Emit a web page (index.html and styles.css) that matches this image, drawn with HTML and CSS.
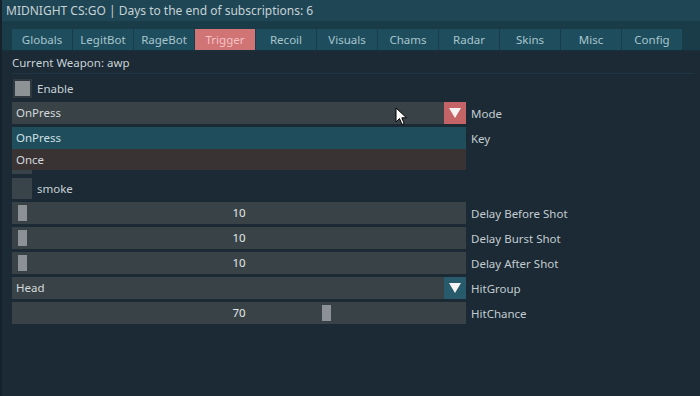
FILE: index.html
```html
<!DOCTYPE html>
<html lang="en">
<head>
    <meta charset="UTF-8">
    <title>MIDNIGHT CS:GO</title>
    <link rel="stylesheet" href="styles.css">
</head>
<body>
    <div class="window">
        <div class="titlebar">MIDNIGHT CS:GO | Days to the end of subscriptions: 6</div>

        <div class="tabs-area">
            <div class="tabs">
                <div class="tab">Globals</div>
                <div class="tab">LegitBot</div>
                <div class="tab">RageBot</div>
                <div class="tab active">Trigger</div>
                <div class="tab">Recoil</div>
                <div class="tab">Visuals</div>
                <div class="tab">Chams</div>
                <div class="tab">Radar</div>
                <div class="tab">Skins</div>
                <div class="tab">Misc</div>
                <div class="tab">Config</div>
            </div>
        </div>

        <div class="content">
            <div class="weapon">Current Weapon: awp</div>

            <div class="rows">
                <div class="row">
                    <div class="checkbox checked"><span></span></div>
                    <div class="check-label">Enable</div>
                </div>

                <div class="row">
                    <div class="combo">
                        <div class="combo-value">OnPress</div>
                        <div class="combo-arrow red"><span></span></div>
                    </div>
                    <div class="label">Mode</div>
                </div>

                <div class="row">
                    <div class="combo"><div class="combo-value"></div></div>
                    <div class="label">Key</div>
                </div>

                <div class="row">
                    <div class="checkbox"></div>
                </div>

                <div class="row">
                    <div class="checkbox"></div>
                    <div class="check-label">smoke</div>
                </div>

                <div class="row">
                    <div class="slider">
                        <div class="grab" style="left: 6px"></div>
                        <div class="slider-value">10</div>
                    </div>
                    <div class="label">Delay Before Shot</div>
                </div>

                <div class="row">
                    <div class="slider">
                        <div class="grab" style="left: 6px"></div>
                        <div class="slider-value">10</div>
                    </div>
                    <div class="label">Delay Burst Shot</div>
                </div>

                <div class="row">
                    <div class="slider">
                        <div class="grab" style="left: 6px"></div>
                        <div class="slider-value">10</div>
                    </div>
                    <div class="label">Delay After Shot</div>
                </div>

                <div class="row">
                    <div class="combo">
                        <div class="combo-value">Head</div>
                        <div class="combo-arrow teal"><span></span></div>
                    </div>
                    <div class="label">HitGroup</div>
                </div>

                <div class="row">
                    <div class="slider">
                        <div class="grab" style="left: 310px"></div>
                        <div class="slider-value">70</div>
                    </div>
                    <div class="label">HitChance</div>
                </div>
            </div>

            <!-- open popup of the Mode combo -->
            <div class="popup">
                <div class="popup-item selected">OnPress</div>
                <div class="popup-item">Once</div>
            </div>
        </div>

        <svg class="cursor" width="14" height="20" viewBox="0 0 14 20">
            <path d="M1 1 L1 15 L4.5 11.5 L7 17.5 L9.2 16.6 L6.8 10.8 L11.5 10.8 Z" fill="#fff" stroke="#000" stroke-width="1"/>
        </svg>
    </div>
</body>
</html>
```

FILE: styles.css
```css
/* General */
body {
    margin: 0;
    font-family: 'Noto Sans', 'Open Sans', sans-serif;
    background: #1b2a35;
}

.window {
    position: relative;
    width: 700px;
    height: 396px;
    background: #1b2a35;
    border-left: 2px solid #16222b;
    box-sizing: border-box;
    overflow: hidden;
}

.titlebar {
    height: 21px;
    line-height: 22px;
    padding-left: 4px;
    background: #1f4654;
    color: #c6d2d7;
    font-size: 12px;
    white-space: nowrap;
}

/* Tabs */
.tabs-area {
    height: 30px;
    padding: 8px 3px 0 10px;
    box-sizing: border-box;
    background: #1a3b48;
    border-bottom: 1px solid #18303b;
}

.tabs {
    display: flex;
    height: 21px;
}

.tab {
    width: 60px;
    margin-right: 1px;
    background: #1e4e5e;
    color: #a9c4cc;
    font-size: 11.5px;
    line-height: 21px;
    text-align: center;
}

.tab.active {
    background: #d07476;
    color: #f4c2c2;
}

/* Content */
.content {
    position: relative;
    padding: 0 0 0 10px;
}

.weapon {
    height: 22px;
    line-height: 23px;
    color: #c9d2d6;
    font-size: 11.5px;
    border-bottom: 1px solid #213644;
    margin-right: 6px;
}

.rows {
    display: flex;
    flex-direction: column;
    gap: 3px;
    padding-top: 3px;
}

.row {
    display: flex;
    align-items: center;
    height: 22px;
    gap: 5px;
}

.label {
    color: #c3ccd1;
    font-size: 11.5px;
}

.check-label {
    color: #c9d1d5;
    font-size: 11.5px;
}

.checkbox {
    width: 20px;
    height: 21px;
    box-sizing: border-box;
    background: #39434a;
}

.checkbox.checked {
    margin-left: 1px;
    width: 19px;
    height: 19px;
    padding: 2px;
    background: #2f393f;
}

.checkbox.checked span {
    display: block;
    width: 100%;
    height: 100%;
    background: #8d9295;
}

/* Combo */
.combo {
    display: flex;
    width: 454px;
    height: 22px;
    background: #394347;
}

.combo-value {
    flex: 1;
    padding-left: 4px;
    line-height: 22px;
    color: #d3d9dc;
    font-size: 11.5px;
}

.combo-arrow {
    width: 22px;
    height: 22px;
    display: flex;
    align-items: center;
    justify-content: center;
}

.combo-arrow span {
    width: 0;
    height: 0;
    border-left: 6px solid transparent;
    border-right: 6px solid transparent;
    border-top: 10px solid #f6f2f2;
}

.combo-arrow.red {
    background: #c46466;
}

.combo-arrow.teal {
    background: #275b6b;
}

/* Slider */
.slider {
    position: relative;
    width: 454px;
    height: 22px;
    background: #394347;
}

.grab {
    position: absolute;
    top: 3px;
    width: 9px;
    height: 16px;
    background: #8b9194;
}

.slider-value {
    line-height: 22px;
    text-align: center;
    color: #e3e7e9;
    font-size: 11.5px;
}

/* Popup */
.popup {
    position: absolute;
    left: 10px;
    top: 76px;
    width: 454px;
}

.popup-item {
    height: 21px;
    line-height: 21px;
    padding-left: 4px;
    font-size: 11.5px;
    color: #d3d9dc;
    background: #3a3334;
}

.popup-item.selected {
    height: 22px;
    background: #1f4d5c;
    color: #cfe0e6;
}

.cursor {
    position: absolute;
    left: 393px;
    top: 107px;
}
```
